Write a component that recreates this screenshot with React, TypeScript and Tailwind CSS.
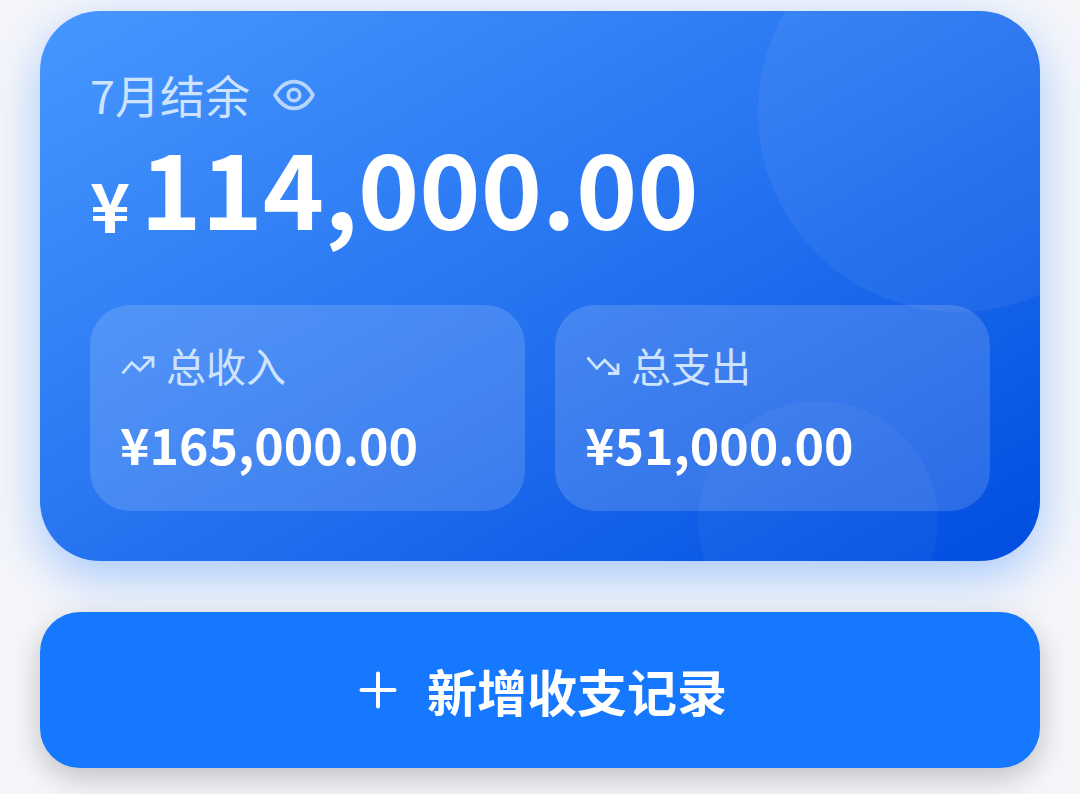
import { useState } from "react";

const formatMoney = (val: number) =>
  new Intl.NumberFormat("en-US", { minimumFractionDigits: 2, maximumFractionDigits: 2 }).format(val);

function EyeIcon() {
  return (
    <svg width="44" height="44" viewBox="0 0 44 44" fill="none" stroke="currentColor" strokeWidth="3.6" aria-hidden="true">
      <path d="M3 22C8.5 12.5 14.5 8.6 22 8.6S35.5 12.5 41 22C35.5 31.5 29.5 35.4 22 35.4S8.5 31.5 3 22Z" strokeLinejoin="round" />
      <circle cx="22" cy="22" r="5.8" />
    </svg>
  );
}

function TrendIcon({ down = false }: { down?: boolean }) {
  return (
    <svg width="36" height="36" viewBox="0 0 36 36" fill="none" stroke="currentColor" strokeWidth="2.8" aria-hidden="true">
      {down ? (
        <path d="M2.5 10.5L11.8 21.3L19.7 13.2L32 25.8M23 26.5H33V16.5" />
      ) : (
        <path d="M2.5 26.3L11.8 15.7L20 23.3L32 11.3M23 10.7H33V20.7" />
      )}
    </svg>
  );
}

function StatCard({ label, value, down }: { label: string; value: string; down?: boolean }) {
  return (
    <div className="min-w-0 flex-1 rounded-[40px] bg-white/15 p-[30px]">
      <div className="flex items-center gap-[10px] text-[40px] leading-[60px] text-[#cde3fe]">
        <TrendIcon down={down} />
        <span>{label}</span>
      </div>
      <div className="mt-[10px] text-[50px] font-bold leading-[76px] text-white">¥{value}</div>
    </div>
  );
}

export default function App() {
  const [visible, setVisible] = useState(true);

  const income = 165000;
  const expense = 51000;
  const show = (val: number) => (visible ? formatMoney(val) : "****");

  return (
    <main className="min-h-screen bg-[#f5f6fa] px-10 pb-[26px] pt-[11px] font-['Noto_Sans_CJK_SC',sans-serif]">
      {/* 结余卡片 */}
      <section className="relative overflow-hidden rounded-[60px] bg-[linear-gradient(150deg,#4797ff_0%,#2370ef_55%,#004de0_100%)] p-[50px] shadow-[0_16px_50px_rgba(22,119,255,0.36)]">
        <div className="absolute -right-[118px] -top-[99px] size-[400px] rounded-full bg-white/5" />
        <div className="absolute -bottom-20 right-[102px] size-60 rounded-full bg-white/4" />

        <div className="relative">
          <div className="flex items-center gap-[22px] text-[45px] leading-[68px] text-[#cde3fe]">
            <span>7月结余</span>
            <button type="button" aria-label="显示或隐藏金额" className="text-[#b8d6fd]" onClick={() => setVisible(!visible)}>
              <EyeIcon />
            </button>
          </div>

          <div className="mt-1 flex items-end gap-[10px] font-bold text-white">
            <span className="text-[68px] leading-[66px]">¥</span>
            <span className="text-[104px] leading-[104px]">{show(income - expense)}</span>
          </div>

          <div className="mt-[68px] flex gap-[30px]">
            <StatCard label="总收入" value={show(income)} />
            <StatCard label="总支出" value={show(expense)} down />
          </div>
        </div>
      </section>

      {/* 新增按钮 */}
      <button
        type="button"
        className="relative mt-[51px] flex w-full items-center justify-center gap-6 rounded-[40px] bg-[#1677ff] py-10 text-[50px] font-bold leading-[76px] text-white shadow-[0_10px_30px_rgba(0,0,0,0.22)]"
      >
        <svg width="50" height="50" viewBox="0 0 50 50" fill="none" stroke="currentColor" strokeWidth="4" strokeLinecap="round" aria-hidden="true">
          <path d="M25 8.5V41.5M8.5 25H41.5" />
        </svg>
        新增收支记录
      </button>
    </main>
  );
}
